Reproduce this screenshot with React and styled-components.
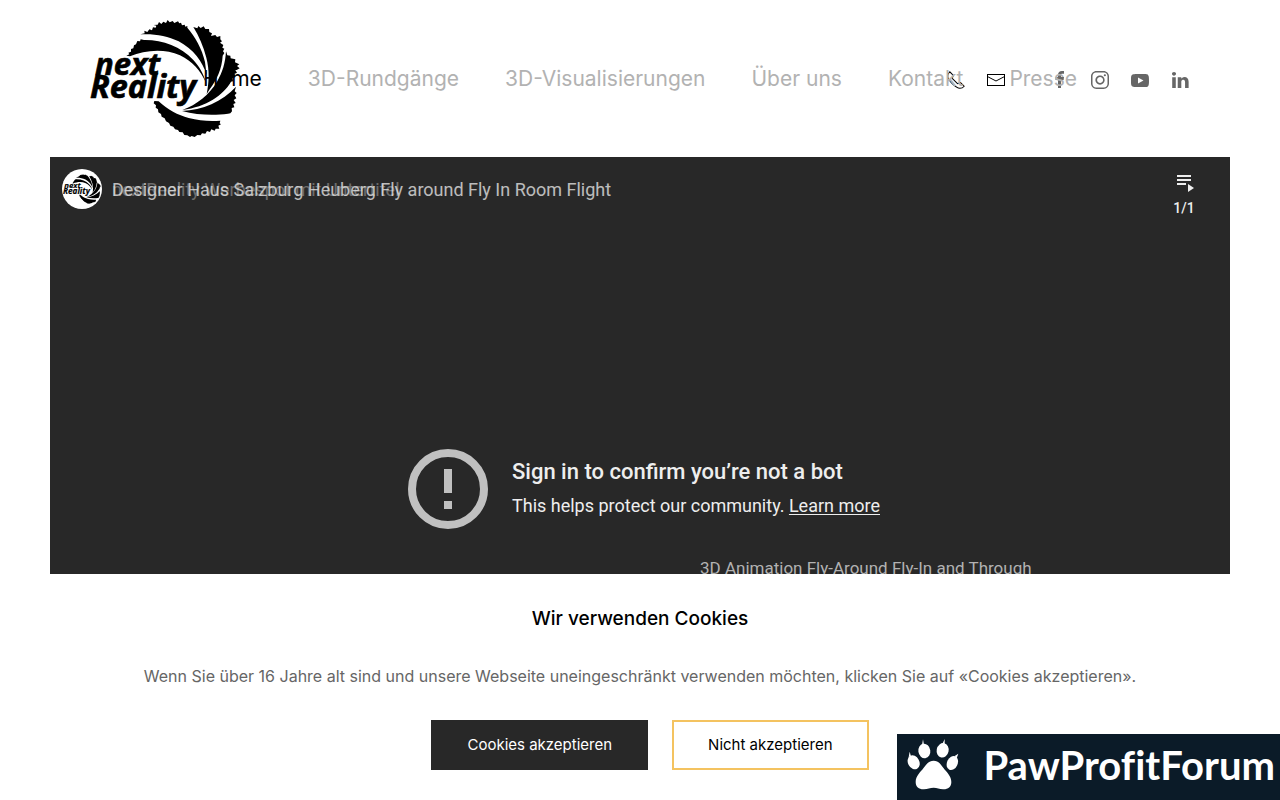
import React, {useState} from "react";
import styled, {createGlobalStyle} from "styled-components";

const GlobalStyle = createGlobalStyle`
  * {
    box-sizing: border-box;
  }

  body {
    margin: 0;
    background: #fff;
    color: #666;
    font-family: Inter, "Liberation Sans", sans-serif;
  }
`;

const menu = ["Home", "3D-Rundgänge", "3D-Visualisierungen", "Über uns", "Kontakt", "Presse"];

const Header = styled.header`
  position: relative;
  display: flex;
  align-items: center;
  justify-content: space-between;
  padding: 20px 90px;
`;

const LogoLink = styled.a`
  display: block;
  width: 150px;
  height: 117px;
`;

const LogoSvg = styled.svg`
  display: block;
  width: 100%;
  height: 100%;
  overflow: visible;
`;

/* centred over the whole header, it may run over logo and icons */
const Nav = styled.nav`
  position: absolute;
  inset: 0;
  display: flex;
  align-items: center;
  justify-content: center;
  gap: 46px;
  pointer-events: none;
`;

const NavLink = styled.a`
  color: ${props => (props.$active ? "#000" : "#b2b2b2")};
  font-size: 21px;
  font-weight: 400;
  line-height: 30px;
  text-decoration: none;
  white-space: nowrap;
  pointer-events: auto;
`;

const IconBar = styled.div`
  display: flex;
  align-items: center;
  gap: 44px;
  padding-top: 3px;
`;

const IconGroup = styled.div`
  display: flex;
  gap: 20px;
`;

const IconLink = styled.a`
  display: block;
  height: 20px;
  color: ${props => (props.$dark ? "#000" : "#666")};
`;

const Main = styled.main`
  padding: 0 50px;
`;

const Player = styled.section`
  position: relative;
  display: flex;
  flex-direction: column;
  aspect-ratio: 16 / 9;
  background: #282828;
  color: #eee;
  font-family: Roboto, "Liberation Sans", sans-serif;
`;

const PlayerTop = styled.div`
  position: absolute;
  inset: 0 0 auto;
  display: flex;
  align-items: flex-start;
  gap: 10px;
  padding: 12px;
`;

const Avatar = styled.span`
  display: flex;
  align-items: center;
  width: 40px;
  height: 40px;
  padding: 1px;
  border-radius: 50%;
  background: #fff;
`;

const Titles = styled.div`
  display: grid;
  flex: 1;
`;

const VideoTitle = styled.a`
  grid-area: 1 / 1;
  color: #eee;
  font-size: 18px;
  line-height: 42px;
  text-decoration: none;
  opacity: ${props => (props.$fading ? 0.35 : 0.75)};
`;

const Playlist = styled.button`
  display: flex;
  flex-direction: column;
  align-items: center;
  width: 68px;
  padding: 0;
  border: 0;
  background: none;
  color: #eee;
  font-family: inherit;
  font-size: 14px;
  font-weight: 500;
  line-height: 22px;
`;

const ErrorBox = styled.div`
  display: flex;
  flex: 1;
  align-items: center;
  gap: 24px;
  margin: 0 auto;
  padding-left: 8px;
`;

const ErrorTitle = styled.h2`
  margin: 0;
  color: #eee;
  font-size: 22px;
  font-weight: 500;
  line-height: 34px;
`;

const ErrorText = styled.p`
  margin: 0;
  font-size: 18px;
  line-height: 34px;

  a {
    color: inherit;
    text-underline-offset: 2px;
  }
`;

const Caption = styled.p`
  position: absolute;
  top: 399px;
  left: 50%;
  margin: 0;
  padding-left: 60px;
  color: #b2b2b2;
  font-size: 17px;
  line-height: 24px;
`;

const CookieBar = styled.section`
  position: fixed;
  inset: auto 0 0;
  display: flex;
  flex-direction: column;
  align-items: center;
  padding: 30px 50px;
  background: #fff;
  text-align: center;
`;

const CookieTitle = styled.h3`
  margin: 0;
  color: #000;
  font-size: 19px;
  font-weight: 500;
  line-height: 30px;
`;

const CookieText = styled.p`
  margin: 30px 0 32px;
  font-size: 16px;
  line-height: 24px;
`;

const Actions = styled.div`
  display: flex;
  gap: 24px;
  padding-left: 20px;
`;

const Button = styled.button`
  height: 50px;
  padding: 0 34px 2px;
  border: 2px solid ${props => (props.$primary ? "#282828" : "#f4c360")};
  background: ${props => (props.$primary ? "#282828" : "#fff")};
  color: ${props => (props.$primary ? "#fff" : "#000")};
  font-family: inherit;
  font-size: 15px;
`;

const Badge = styled.a`
  position: fixed;
  right: 0;
  bottom: 0;
  display: flex;
  align-items: center;
  gap: 24px;
  height: 66px;
  padding: 0 5px 4px 10px;
  background: #0b1b28;
  color: #fff;
  font-family: Lato, "Liberation Sans", sans-serif;
  font-size: 40px;
  font-weight: 700;
  font-variant-ligatures: none;
  line-height: 60px;
  text-decoration: none;
`;

const Logo = () => (
    <LogoSvg viewBox="30 30 450 351" aria-hidden="true">
        <path d="M139 137l9-4-3-5 8-3 0-8 7-2 2-9 6-3 4-10 8 1 2-6 10 2C246 89 302 108 340 150C358 170 370 190 377 216C362 184 338 154 300 136C252 114 194 120 150 139z"/>
        <path d="M181 73l13-3-1-8 9 4 6-8 8 3 3-9 8 1 2-6-8-2 12-1 4-8 7 6 6-7 8 4 5-9 6 7 9-4 5 6 11-5 4 6 5-2 3 8 8-2 2 6 6-2 0 5C345 79 366 116 375 156L380 196C368 154 340 118 296 94C262 77 224 71 181 73z"/>
        <path d="M340 51l12 4 3-7 7 6 9-5 5 8 11 0 1 9 8 4-3 8 13-3 5 6 10-3 0 10 5 6-6 4 10 7-3 8 6 3-4 8 4 5-5 8C426 176 410 210 389 238L380 252C387 218 389 181 379 143C370 109 357 78 340 51z"/>
        <path d="M438 124l4 12 9 1 1 8 14 3-1 9 13 6-7 5 8 7-9 5-4 0 5 8-8 4 3 8-8 5 1 9-6 1C430 255 380 290 307 300C351 284 388 253 411 215C428 187 436 158 438 124z"/>
        <path d="M468 230l-4 14 6 5-6 7 5 9-8 5 6 9-7 3 3 10-8 2 1 10-5 6-7 1C404 317 354 316 306 303C367 300 427 275 468 230z"/>
        <path d="M223 273L236 274C263 299 294 316 326 324C358 332 389 335 421 332l-2 8 4 3-8 4 3 9-11 0-3 6-10-4-4 8-9-3-5 8-10-1-4 6-10-1-8 6-9-3-5 3-8-5-9-1-5-8-10-1-4-6-9-2-5-8-9-3-4-8-9-5-4-9-9-5-2-8-8-5-1-9-7-5 1-7-7-6z"/>
        <g fontFamily="Open Sans, Noto Sans, sans-serif" fontWeight="700" fontStyle="italic" stroke="#000" strokeWidth="2">
            <text x="45" y="194" fontSize="93">next</text>
            <text x="30" y="264" fontSize="97">Reality</text>
        </g>
    </LogoSvg>
);

const icons = {
    Telefon: <path fill="none" stroke="currentColor" strokeWidth="1.01" d="M6.189,13.611C8.134,15.525 11.097,18.239 13.867,18.257C16.47,18.275 18.2,16.241 18.2,16.241L14.509,12.551L11.539,13.639L6.189,8.29L7.313,5.355L3.76,1.8C3.76,1.8 1.732,3.537 1.7,6.092C1.667,8.809 4.347,11.738 6.189,13.611"/>,
    Mail: <>
        <polyline fill="none" stroke="currentColor" points="1.4,6.5 10,11 18.6,6.5"/>
        <path d="M 1,4 1,16 19,16 19,4 1,4 Z M 18,15 2,15 2,5 18,5 18,15 Z"/>
    </>,
    Facebook: <path d="M11,10h2.6l0.4-3H11V5.3c0-0.9,0.2-1.5,1.5-1.5H14V1.1c-0.3,0-1-0.1-2.1-0.1C9.6,1,8,2.4,8,5v2H5.5v3H8v8h3V10z"/>,
    Instagram: <>
        <path d="M13.55,1H6.46C3.45,1,1,3.44,1,6.44v7.12c0,3,2.45,5.44,5.46,5.44h7.08c3.02,0,5.46-2.44,5.46-5.44V6.44 C19.01,3.44,16.56,1,13.55,1z M17.5,14c0,1.93-1.57,3.5-3.5,3.5H6c-1.93,0-3.5-1.57-3.5-3.5V6c0-1.93,1.57-3.5,3.5-3.5h8 c1.93,0,3.5,1.57,3.5,3.5V14z"/>
        <circle cx="14.87" cy="5.26" r="1.09"/>
        <path d="M10.03,5.45c-2.55,0-4.63,2.06-4.63,4.6c0,2.55,2.07,4.61,4.63,4.61c2.56,0,4.63-2.061,4.63-4.61 C14.65,7.51,12.58,5.45,10.03,5.45z M10.08,13c-1.66,0-3-1.34-3-2.99c0-1.65,1.34-2.99,3-2.99s3,1.34,3,2.99 C13.08,11.66,11.74,13,10.08,13z"/>
    </>,
    YouTube: <path d="M15,4.1c1,0.1,2.3,0,3,0.8c0.8,0.8,0.9,2.1,0.9,3.1C19,9.2,19,10.9,19,12c-0.1,1.1,0,2.4-0.5,3.4c-0.5,1.1-1.4,1.5-2.5,1.6 c-1.2,0.1-8.6,0.1-11,0c-1.1-0.1-2.4-0.1-3.2-1c-0.7-0.8-0.7-2-0.8-3C1,11.8,1,10.1,1,8.9c0-1.1,0-2.4,0.5-3.4C2,4.5,3,4.3,4.1,4.2 C5.3,4.1,12.6,4,15,4.1z M8,7.5v6l5.5-3L8,7.5z"/>,
    LinkedIn: <>
        <path d="M5.77,17.89 L5.77,7.17 L2.21,7.17 L2.21,17.89 Z M3.99,5.71 C5.23,5.71 6.01,4.89 6.01,3.86 C5.99,2.8 5.24,2 4.02,2 C2.8,2 2,2.8 2,3.85 C2,4.88 2.77,5.7 3.97,5.7 Z"/>
        <path d="M7.75,17.89 L11.31,17.89 L11.31,11.9 C11.31,11.58 11.33,11.26 11.43,11.03 C11.69,10.39 12.27,9.73 13.26,9.73 C14.55,9.73 15.06,10.71 15.06,12.15 L15.06,17.89 L18.62,17.89 L18.62,11.74 C18.62,8.45 16.86,6.92 14.52,6.92 C12.6,6.92 11.75,7.99 11.28,8.73 L11.3,8.73 L11.3,7.17 L7.75,7.17 C7.79,8.17 7.75,17.89 7.75,17.89 Z"/>
    </>
};

const Icon = ({name, dark}) => (
    <IconLink href="#" aria-label={name} $dark={dark}>
        <svg width="20" height="20" viewBox="0 0 20 20" fill="currentColor">{icons[name]}</svg>
    </IconLink>
);

const Paw = () => (
    <svg width="52" height="52" viewBox="50 42 156 156" fill="#fff" aria-hidden="true">
        <path d="M130 107C146 107 152 119 160 130C168 141 183 153 183 171C183 186 172 194 158 193C147 192 140 188 130 188C119 188 112 192 101 193C87 194 76 186 76 171C76 153 91 141 99 130C107 119 114 107 130 107z"/>
        <ellipse cx="102" cy="78" rx="18" ry="22" transform="rotate(-8 102 78)"/>
        <ellipse cx="157" cy="76" rx="18" ry="22" transform="rotate(12 157 76)"/>
        <ellipse cx="70" cy="112" rx="17" ry="22" transform="rotate(-28 70 112)"/>
        <ellipse cx="186" cy="114" rx="16" ry="22" transform="rotate(24 186 114)"/>
        <path d="M95 60L98 43L101 60z M156 57L163 42L163 60z M55 96L58 80L62 94z M193 93L204 86L199 100z"/>
    </svg>
);

const CookieNotice = ({onClose}) => (
    <CookieBar>
        <CookieTitle>Wir verwenden Cookies</CookieTitle>
        <CookieText>
            Wenn Sie über 16 Jahre alt sind und unsere Webseite uneingeschränkt verwenden möchten, klicken Sie auf «Cookies akzeptieren».
        </CookieText>
        <Actions>
            <Button $primary onClick={onClose}>Cookies akzeptieren</Button>
            <Button onClick={onClose}>Nicht akzeptieren</Button>
        </Actions>
    </CookieBar>
);

const App = () => {
    const [cookies, setCookies] = useState(true);

    return (
        <>
            <GlobalStyle/>
            <Header>
                <LogoLink href="#" aria-label="nextReality"><Logo/></LogoLink>
                <Nav>
                    {menu.map((item, index) => (
                        <NavLink key={item} href="#" $active={index === 0}>{item}</NavLink>
                    ))}
                </Nav>
                <IconBar>
                    <IconGroup>
                        <Icon name="Telefon" dark/>
                        <Icon name="Mail" dark/>
                    </IconGroup>
                    <IconGroup>
                        <Icon name="Facebook"/>
                        <Icon name="Instagram"/>
                        <Icon name="YouTube"/>
                        <Icon name="LinkedIn"/>
                    </IconGroup>
                </IconBar>
            </Header>
            <Main>
                <Player>
                    <PlayerTop>
                        <Avatar><Logo/></Avatar>
                        <Titles>
                            <VideoTitle href="#" $fading>nextReality Werbespot mit Untertitel</VideoTitle>
                            <VideoTitle href="#">Designer Haus Salzburg Heuberg Fly around Fly In Room Flight</VideoTitle>
                        </Titles>
                        <Playlist>
                            <svg width="24" height="28" viewBox="0 0 24 28" fill="#eee" aria-hidden="true">
                                <path d="M5 6h14v2H5z M5 10h14v2H5z M5 14h9v2H5z M16 15l6 4-6 4z"/>
                            </svg>
                            1/1
                        </Playlist>
                    </PlayerTop>
                    <ErrorBox>
                        <svg width="80" height="80" viewBox="0 0 80 80" aria-hidden="true">
                            <circle cx="40" cy="40" r="36" fill="none" stroke="#c0c0c0" strokeWidth="8"/>
                            <path fill="#c0c0c0" d="M36 20h8v24h-8z M36 52h8v8h-8z"/>
                        </svg>
                        <div>
                            <ErrorTitle>Sign in to confirm you’re not a bot</ErrorTitle>
                            <ErrorText>This helps protect our community. <a href="#">Learn more</a></ErrorText>
                        </div>
                    </ErrorBox>
                    <Caption>3D Animation Fly-Around Fly-In and Through</Caption>
                </Player>
            </Main>
            {cookies && <CookieNotice onClose={() => setCookies(false)}/>}
            <Badge href="#"><Paw/>PawProfitForum</Badge>
        </>
    );
};

export default App;
